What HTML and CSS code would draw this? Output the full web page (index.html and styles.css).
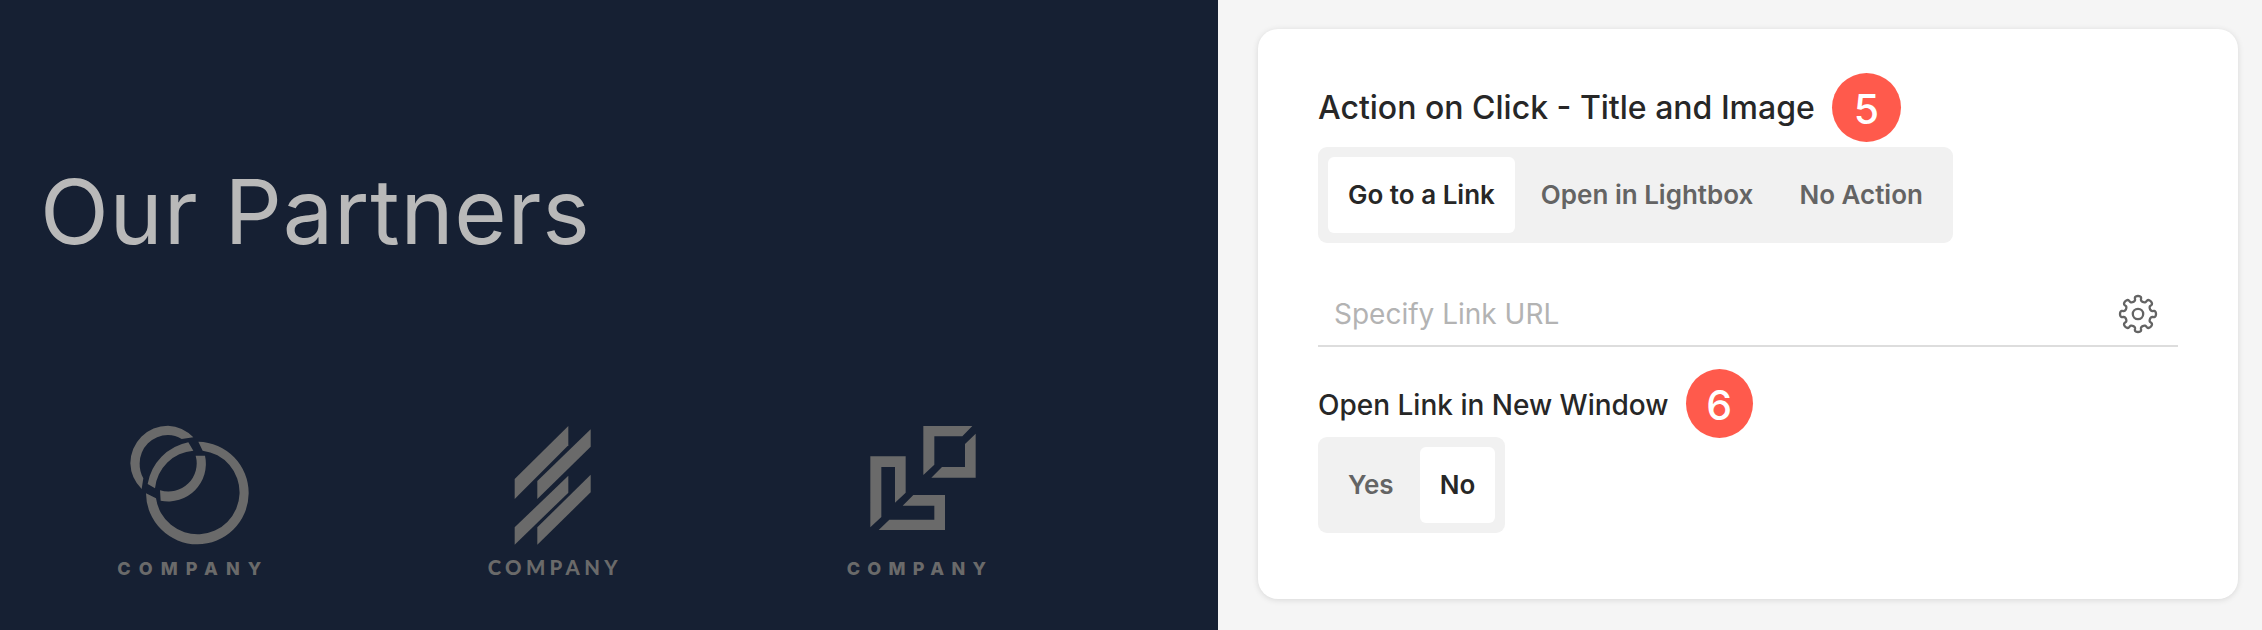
FILE: index.html
```html
<!DOCTYPE html>
<html lang="en">
<head>
  <meta charset="UTF-8">
  <meta name="viewport" content="width=device-width, initial-scale=1.0">
  <title>Our Partners</title>
  <link rel="stylesheet" href="styles.css">
</head>
<body>

  <div class="page">
    <section class="partners">
      <h1>Our Partners</h1>
      <div class="logos">
        <svg class="logo" viewBox="0 0 540 540">
          <path d="M125 237A113 113 0 0 1 91 160A113 113 0 0 1 204 47A113 113 0 0 1 280 82L245 87A85 85 0 0 0 204 75A85 85 0 0 0 119 160A85 85 0 0 0 130 205Z"/>
          <path d="M143 222A154 154 0 0 1 265 97L280 122A126 126 0 0 0 165 235Z"/>
          <path d="M295 95A154 154 0 1 1 138 250L168 265A126 126 0 1 0 308 122Z"/>
          <path d="M287 137H315A113 113 0 0 1 182 272L180 241A85 85 0 0 0 287 137Z"/>
          <text class="logo-bold" x="52" y="494" textLength="432">COMPANY</text>
        </svg>
        <svg class="logo" viewBox="0 0 540 540">
          <path d="M134 207L295 48V106L134 267Z"/>
          <path d="M202 213L362 58V110L202 267Z"/>
          <path d="M134 352L295 197V248L134 404Z"/>
          <path d="M202 352L362 194V247L202 404Z"/>
          <text class="logo-lato" x="53" y="495" textLength="390">COMPANY</text>
        </svg>
        <svg class="logo" viewBox="0 0 540 540">
          <path d="M280 48H427L397 79H313V164L280 195Z"/>
          <path d="M437 71V203H304L336 171H405V102Z"/>
          <path d="M121 139H227V248L195 278V171H154V321L121 352Z"/>
          <path d="M250 255H345V360H146L178 329H313V287H218Z"/>
          <text class="logo-bold" x="50" y="496" textLength="418">COMPANY</text>
        </svg>
      </div>
    </section>

    <section class="settings">
      <div class="card">
        <div class="row">
          <h2>Action on Click - Title and Image</h2>
          <span class="badge">5</span>
        </div>
        <div class="segment">
          <button class="active">Go to a Link</button>
          <button>Open in Lightbox</button>
          <button>No Action</button>
        </div>

        <div class="link-field">
          <span>Specify Link URL</span>
          <svg class="gear" viewBox="-20 -20 40 40">
            <path id="gear" d=""/>
            <circle r="5.2"/>
          </svg>
        </div>

        <div class="row">
          <h3>Open Link in New Window</h3>
          <span class="badge badge-small">6</span>
        </div>
        <div class="segment segment-small">
          <button>Yes</button>
          <button class="active">No</button>
        </div>
      </div>
    </section>
  </div>

  <script>
    // eight rounded teeth, drawn as a wave around the circle
    let d = '';
    for (let i = 0; i < 360; i += 2) {
      const a = i * Math.PI / 180;
      const r = 15.5 + 2.5 * Math.cos(8 * a);
      const t = a + 0.06 * Math.sin(16 * a);
      d += (i ? 'L' : 'M') + (r * Math.cos(t)).toFixed(2) + ' ' + (r * Math.sin(t)).toFixed(2);
    }
    document.getElementById('gear').setAttribute('d', d + 'Z');
  </script>

</body>
</html>
```
FILE: styles.css
```css
* { box-sizing: border-box; }
body { font-family: Inter, sans-serif; margin: 0; background-color: #f5f5f5; }
h1, h2, h3 { margin: 0; white-space: nowrap; }
.page { display: flex; height: 630px; }

.partners { width: 1218px; background-color: #162033; padding: 157px 0 0 40px; }
.partners h1 { font-size: 90px; line-height: 109px; font-weight: 400; letter-spacing: 0.8px; color: #b9b9b9; }
.logos { display: flex; justify-content: space-between; width: 910px; margin: 144px 0 0 60px; }
.logo { width: 180px; height: 180px; fill: #6a6a6a; }
.logo:nth-child(2) { margin-left: 10px; }
.logo-bold { font-family: Inter, sans-serif; font-size: 54px; font-weight: 800; }
.logo-lato { font-family: Lato, sans-serif; font-size: 61px; font-weight: 900; }

.settings { flex: 1; padding: 29px 24px 31px 40px; }
.card { height: 570px; padding: 44px 60px; background-color: #fff; border-radius: 20px; box-shadow: 0 1px 6px rgba(0, 0, 0, 0.12); }
.row { display: flex; align-items: center; gap: 17px; height: 69px; color: #272727; }
.row h2 { font-size: 32px; font-weight: 500; }
.row h3 { padding-top: 2px; font-size: 28px; font-weight: 500; }
.badge { width: 69px; height: 69px; border-radius: 50%; background-color: #ff5a4c; color: #fff; font-size: 41px; line-height: 72px; font-weight: 500; text-align: center; }
.badge-small { width: 67px; }

.segment { display: flex; width: fit-content; gap: 6px; height: 96px; margin-top: 5px; padding: 10px; background-color: #f1f1f1; border-radius: 9px; }
.segment-small { margin-top: -1px; }
.segment button { padding: 0 20px 2px; border: none; border-radius: 6px; background: none; font-family: inherit; font-size: 26px; font-weight: 600; color: #646464; white-space: nowrap; }
.segment .active { background-color: #fff; color: #272727; }

.link-field { display: flex; align-items: center; justify-content: space-between; height: 66px; margin: 38px 0 22px; padding: 2px 20px 0 16px; border-bottom: 2px solid #ddd; font-size: 28px; color: #b3b3b3; }
.gear { width: 40px; height: 40px; fill: none; stroke: #646464; stroke-width: 2.3; }
```
